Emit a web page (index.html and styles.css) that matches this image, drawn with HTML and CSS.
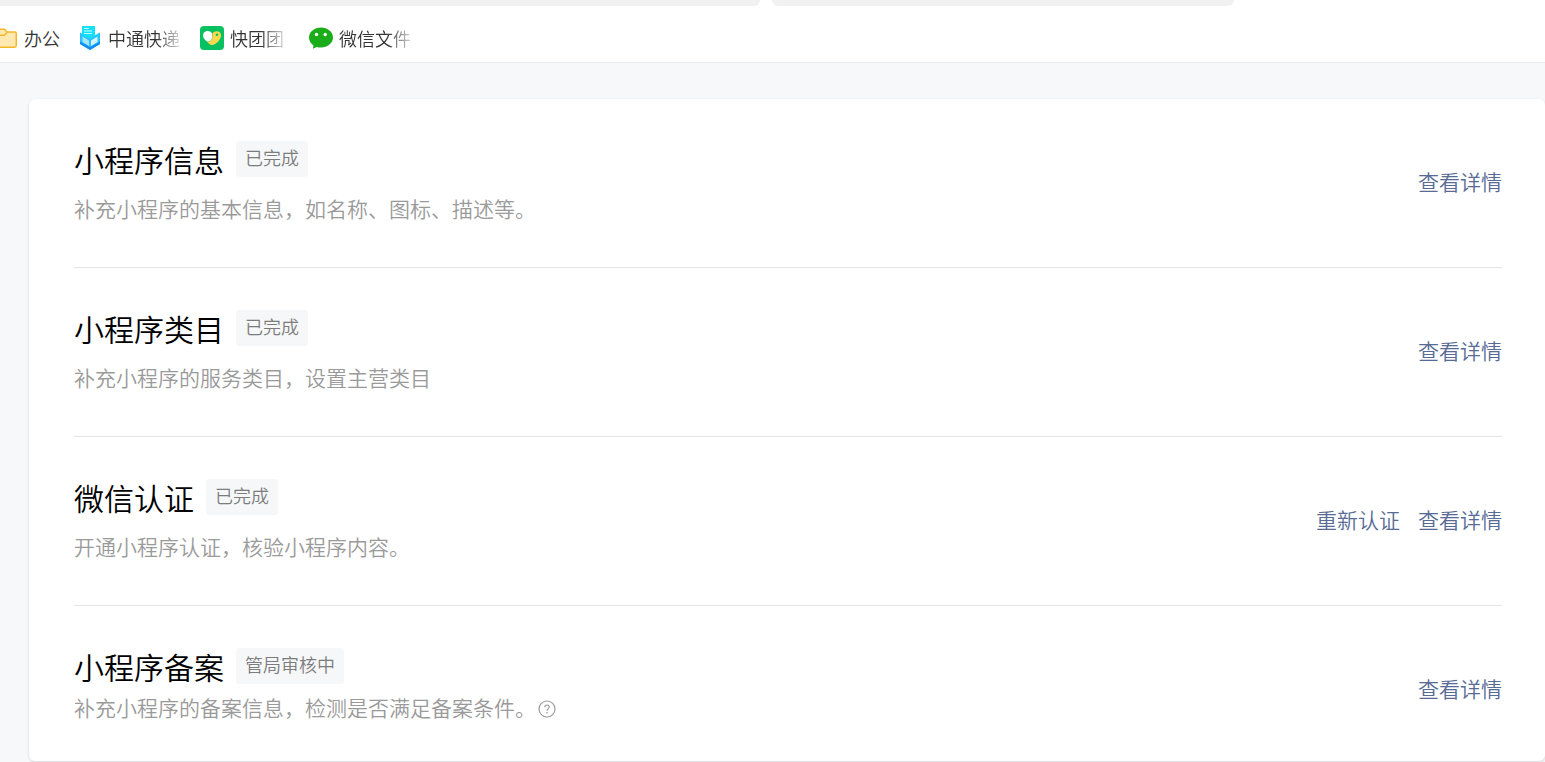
FILE: index.html
```html
<!DOCTYPE html>
<html lang="zh-CN">
<head>
  <meta charset="UTF-8" />
  <meta name="viewport" content="width=device-width, initial-scale=1" />
  <title>小程序发布流程</title>
  <link rel="stylesheet" href="styles.css">
</head>
<body>

<header>
  <div class="tabs">
    <div class="tab tab-first"></div>
    <div class="tab tab-second"></div>
  </div>
  <nav class="bookmarks">
    <a class="bookmark" href="#">
      <svg class="icon-folder" width="18" height="24" viewBox="0 0 18 24">
        <path d="M-4 3.200H4.500L7 6H15Q16.300 6 16.300 7.500V19.500Q16.300 21.200 14.600 21.200H-4Z" fill="#ffe9b0" stroke="#f4b728" stroke-width="1.500"/>
        <path d="M-4 9.300H4.500L7 6.500" fill="none" stroke="#f4b728" stroke-width="1.500"/>
      </svg>
      <span>办公</span>
    </a>
    <a class="bookmark bookmark-express" href="#">
      <svg width="24" height="24" viewBox="0 0 24 24">
        <path d="M2 6.500L12 12L22 6.500V18L12 24L2 18Z" fill="#25c4ff"/>
        <path d="M2 18L12 24L22 18V15.500L12 21L2 15.500Z" fill="#168cf0"/>
        <path d="M4.500 10.500L11 14.500V20L4.500 16Z" fill="#a6e4ff"/>
        <path d="M19.500 10.500L13 14.500V20L19.500 16Z" fill="#d4f4ff"/>
        <path d="M4 0H17V9.500L12 12.500L4 9Z" fill="#13e0fa"/>
        <path d="M6 2.500H11M6 5H14M6 7.500H14" stroke="#c4faff" stroke-width="1.200"/>
      </svg>
      <span class="fade">中通快递</span>
    </a>
    <a class="bookmark bookmark-group" href="#">
      <svg width="24" height="24" viewBox="0 0 24 24">
        <rect width="24" height="24" rx="4" fill="#07c160"/>
        <path d="M12 7.500C9.500 3.500 3 4.800 3 9.500C3 12.300 5.200 14.200 7.300 15.800C11 15.600 12.800 12.500 12 7.500Z" fill="#fff"/>
        <path d="M12.300 8C13.500 4.400 21 4 21 9.500C21 13.300 16 19 12 19C10.200 19 8.300 17.300 7.300 15.800C11.500 15.800 13 12.500 12.300 8Z" fill="#ffd84d"/>
        <circle cx="17" cy="8.800" r="1.300" fill="#07c160"/>
      </svg>
      <span class="fade">快团团</span>
    </a>
    <a class="bookmark bookmark-wechat" href="#">
      <svg width="24" height="24" viewBox="0 0 24 24">
        <path d="M12 1.500C5.400 1.500 0 5.900 0 11.500C0 14.800 1.700 17.600 4.500 19.400L3.800 22.800L7.700 20.900C9 21.300 10.500 21.500 12 21.500C18.600 21.500 24 17.100 24 11.500S18.600 1.500 12 1.500Z" fill="#1aad19"/>
        <circle cx="7.500" cy="8.500" r="1.700" fill="#fff"/>
        <circle cx="16.200" cy="8.500" r="1.700" fill="#fff"/>
      </svg>
      <span class="fade">微信文件</span>
    </a>
  </nav>
</header>

<main>
  <div class="card">
    <section class="step">
      <div class="step-content">
        <div class="step-title">
          <h2>小程序信息</h2>
          <span class="tag">已完成</span>
        </div>
        <p>补充小程序的基本信息，如名称、图标、描述等。</p>
      </div>
      <div class="actions"><a href="#">查看详情</a></div>
    </section>

    <section class="step">
      <div class="step-content">
        <div class="step-title">
          <h2>小程序类目</h2>
          <span class="tag">已完成</span>
        </div>
        <p>补充小程序的服务类目，设置主营类目</p>
      </div>
      <div class="actions"><a href="#">查看详情</a></div>
    </section>

    <section class="step">
      <div class="step-content">
        <div class="step-title">
          <h2>微信认证</h2>
          <span class="tag">已完成</span>
        </div>
        <p>开通小程序认证，核验小程序内容。</p>
      </div>
      <div class="actions"><a href="#">重新认证</a><a href="#">查看详情</a></div>
    </section>

    <section class="step step-record">
      <div class="step-content">
        <div class="step-title">
          <h2>小程序备案</h2>
          <span class="tag">管局审核中</span>
        </div>
        <p>
          补充小程序的备案信息，检测是否满足备案条件。<button class="help" type="button" aria-label="帮助">
            <svg width="18" height="18" viewBox="0 0 18 18" fill="none" stroke="#9a9a9a" stroke-width="1.200">
              <circle cx="9" cy="9" r="8"/>
              <path d="M6.800 7.200C6.800 4.300 11.200 4.300 11.200 7.100C11.200 8.800 9 8.900 9 10.800"/>
              <path d="M9 12V13.400"/>
            </svg>
          </button>
        </p>
      </div>
      <div class="actions"><a href="#">查看详情</a></div>
    </section>
  </div>
</main>

</body>
</html>
```
FILE: styles.css
```css
* {
  margin: 0; padding: 0; box-sizing: border-box;
}
body {
  background: #f7f8fa;
  color: #000;
  font-family: "Noto Sans CJK SC", sans-serif;
  font-weight: 350;
}
a {
  text-decoration: none;
}

header {
  background: white;
  border-bottom: 1px solid #ebecee;
}
.tabs {
  display: flex;
  gap: 12px;
}
.tab {
  height: 6px;
  background: #f1f1f1;
}
.tab-first {
  width: 49.2%;
  border-radius: 0 0 6px 0;
}
.tab-second {
  width: 29.9%;
  border-radius: 0 0 6px 6px;
}
.bookmarks {
  display: flex;
  padding: 20px 0 12px;
}
.bookmark {
  display: flex;
  align-items: center;
  gap: 6px;
  color: #333;
  font-size: 18px;
  line-height: 24px;
  white-space: nowrap;
}
.bookmark svg {
  flex: none;
}
.bookmark-express {
  margin-left: 18px;
}
.bookmark-group {
  margin-left: 20px;
}
.bookmark-wechat {
  margin-left: 25px;
}
.fade {
  -webkit-mask-image: linear-gradient(to right, #000 calc(100% - 24px), rgba(0,0,0,0.2));
  mask-image: linear-gradient(to right, #000 calc(100% - 24px), rgba(0,0,0,0.2));
}

main {
  padding: 36px 0 1px 29px;
}
.card {
  background: white;
  border-radius: 6px;
  padding: 0 43px 0 45px;
  box-shadow: 0 1px 3px rgba(0,0,0,0.15);
}
.step {
  display: flex;
  justify-content: space-between;
  align-items: flex-start;
  padding: 42px 0 41px;
  border-bottom: 1px solid #e4e4e4;
}
.step-title {
  display: flex;
  align-items: center;
  gap: 12px;
  margin-bottom: 13px;
}
.step-title h2 {
  font-weight: 350;
  font-size: 30px;
  line-height: 36px;
}
.tag {
  padding: 0 9px 3px;
  background: #f6f7f9;
  border-radius: 3px;
  color: #7c7c7c;
  font-size: 18px;
  line-height: 33px;
}
.step p {
  color: #9a9a9a;
  font-size: 21px;
  line-height: 36px;
}
.step-record {
  padding-bottom: 36px;
  border-bottom: none;
}
.step-record .step-title {
  margin-bottom: 5px;
}
.actions {
  display: flex;
  gap: 18px;
  padding-top: 22px;
}
.actions a {
  color: #576b95;
  font-size: 21px;
  line-height: 36px;
}
.help {
  margin-left: 2px;
  border: none;
  background: none;
  height: 18px;
  vertical-align: -2px;
  cursor: pointer;
}
.help svg {
  display: block;
}

@media (max-width: 700px) {
  .step {
    flex-direction: column;
  }
}
```
